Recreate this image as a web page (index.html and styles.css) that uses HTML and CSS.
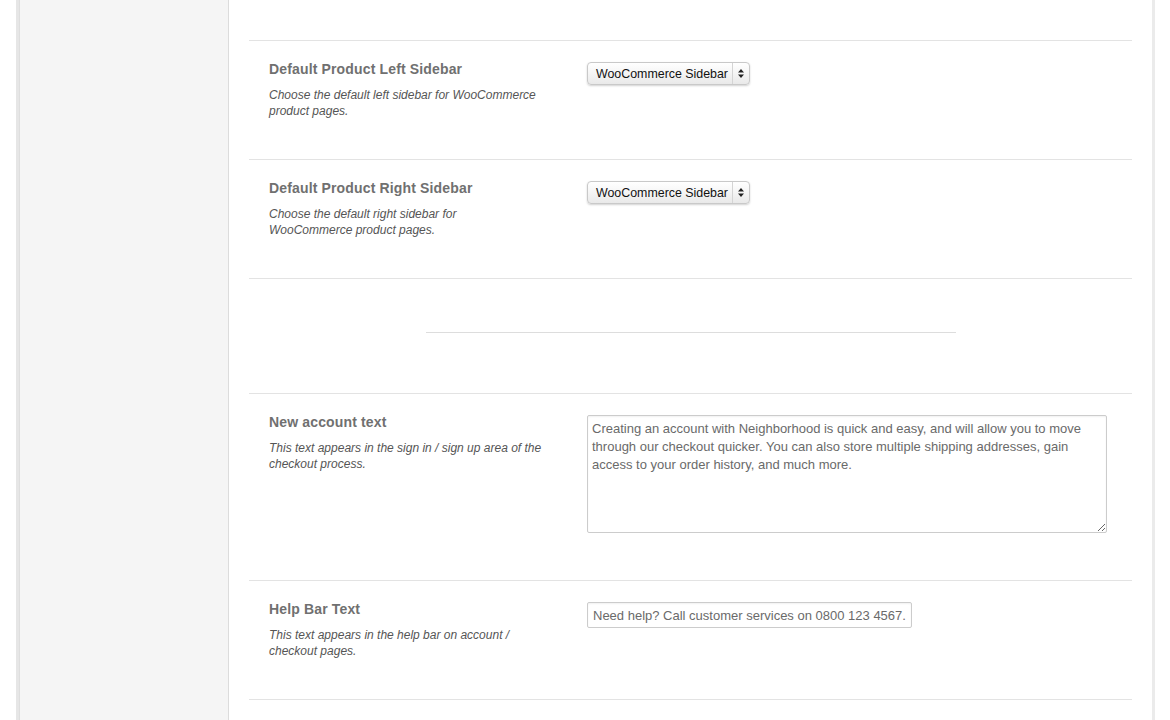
FILE: index.html
```html
<!DOCTYPE html>
<html>
<head>
<meta charset="utf-8">
<title>Theme Options</title>
<link rel="stylesheet" href="styles.css">
</head>
<body>
<div class="frame">
  <aside class="sidebar"></aside>
  <main class="content">
    <section class="row">
      <div class="label">
        <h3 class="title">Default Product Left Sidebar</h3>
        <p class="desc">Choose the default left sidebar for WooCommerce product pages.</p>
      </div>
      <div class="control">
        <div class="select">
          <span class="select-text">WooCommerce Sidebar</span>
          <span class="select-arrows">
            <svg width="6" height="9" viewBox="0 0 6 9"><path d="M3 0L6 3.5H0Z M3 9L0 5.5H6Z" fill="#222"/></svg>
          </span>
        </div>
      </div>
    </section>
    <section class="row">
      <div class="label">
        <h3 class="title">Default Product Right Sidebar</h3>
        <p class="desc">Choose the default right sidebar for WooCommerce product pages.</p>
      </div>
      <div class="control">
        <div class="select">
          <span class="select-text">WooCommerce Sidebar</span>
          <span class="select-arrows">
            <svg width="6" height="9" viewBox="0 0 6 9"><path d="M3 0L6 3.5H0Z M3 9L0 5.5H6Z" fill="#222"/></svg>
          </span>
        </div>
      </div>
    </section>
    <section class="row row-divider">
      <hr class="divider">
    </section>
    <section class="row">
      <div class="label">
        <h3 class="title">New account text</h3>
        <p class="desc">This text appears in the sign in / sign up area of the checkout process.</p>
      </div>
      <div class="control">
        <textarea class="textarea">Creating an account with Neighborhood is quick and easy, and will allow you to move through our checkout quicker. You can also store multiple shipping addresses, gain access to your order history, and much more.</textarea>
      </div>
    </section>
    <section class="row">
      <div class="label">
        <h3 class="title">Help Bar Text</h3>
        <p class="desc">This text appears in the help bar on account / checkout pages.</p>
      </div>
      <div class="control">
        <input class="input" type="text" value="Need help? Call customer services on 0800 123 4567.">
      </div>
    </section>
    <section class="row row-last"></section>
  </main>
</div>
</body>
</html>
```

FILE: styles.css
```css
html, body {
  margin: 0;
  padding: 0;
  background: #ffffff;
  font-family: "Liberation Sans", Arial, sans-serif;
  overflow: hidden;
}

.frame {
  display: flex;
  margin-left: 16px;
  width: 1133px;
  height: 720px;
  overflow: hidden;
  border-left: 3px solid #e6e6e6;
  border-right: 3px solid #ebebeb;
}

.sidebar {
  width: 209px;
  flex: none;
  background: #f5f5f5;
  border-right: 1px solid #dcdcdc;
  box-shadow: inset 1px 0 0 #dedede;
}

.content {
  flex: 1;
  padding: 40px 20px 0;
  background: #ffffff;
}

.row {
  display: flex;
  border-top: 1px solid #e3e3e3;
  padding: 20px 0 40px 20px;
}

.label {
  width: 273px;
  margin-right: 45px;
  flex: none;
}

.title {
  margin: 0;
  font-size: 14px;
  line-height: 16px;
  font-weight: bold;
  letter-spacing: 0.15px;
  color: #707070;
}

.desc {
  margin: 10px 0 0;
  font-size: 12px;
  line-height: 16px;
  font-style: italic;
  color: #555555;
}

.control {
  flex: 1;
  padding-top: 1px;
}

.select {
  display: inline-flex;
  align-items: stretch;
  height: 23px;
  box-sizing: border-box;
  border: 1px solid #c9c9c9;
  border-radius: 4px;
  background: linear-gradient(#ffffff, #f6f6f6 45%, #e9e9e9);
  box-shadow: 0 1px 2px rgba(0, 0, 0, 0.18);
}

.select-text {
  display: flex;
  align-items: center;
  padding: 0 4px 0 8px;
  font-size: 12.4px;
  color: #111111;
  width: 132px;
}

.select-arrows {
  display: flex;
  align-items: center;
  justify-content: center;
  width: 16px;
  border-left: 1px solid #d4d4d4;
}

.row-divider {
  display: block;
  padding: 53px 0 60px;
}

.divider {
  width: 530px;
  margin: 0 auto;
  border: 0;
  border-top: 1px solid #dddddd;
  height: 0;
}

.textarea {
  display: block;
  width: 520px;
  height: 118px;
  margin-bottom: 7px;
  box-sizing: border-box;
  border: 1px solid #cccccc;
  border-radius: 2px;
  padding: 4px 4px;
  font-family: "Liberation Sans", Arial, sans-serif;
  font-size: 13px;
  line-height: 18px;
  color: #6a6a6a;
  background: #ffffff;
  box-shadow: inset 0 1px 2px rgba(0, 0, 0, 0.06);
}

.input {
  display: block;
  width: 325px;
  height: 26px;
  box-sizing: border-box;
  border: 1px solid #cccccc;
  border-radius: 2px;
  padding: 0 5px;
  font-family: "Liberation Sans", Arial, sans-serif;
  font-size: 13px;
  color: #6a6a6a;
  background: #ffffff;
  box-shadow: inset 0 1px 2px rgba(0, 0, 0, 0.06);
}

.row-last {
  height: 40px;
}
```
